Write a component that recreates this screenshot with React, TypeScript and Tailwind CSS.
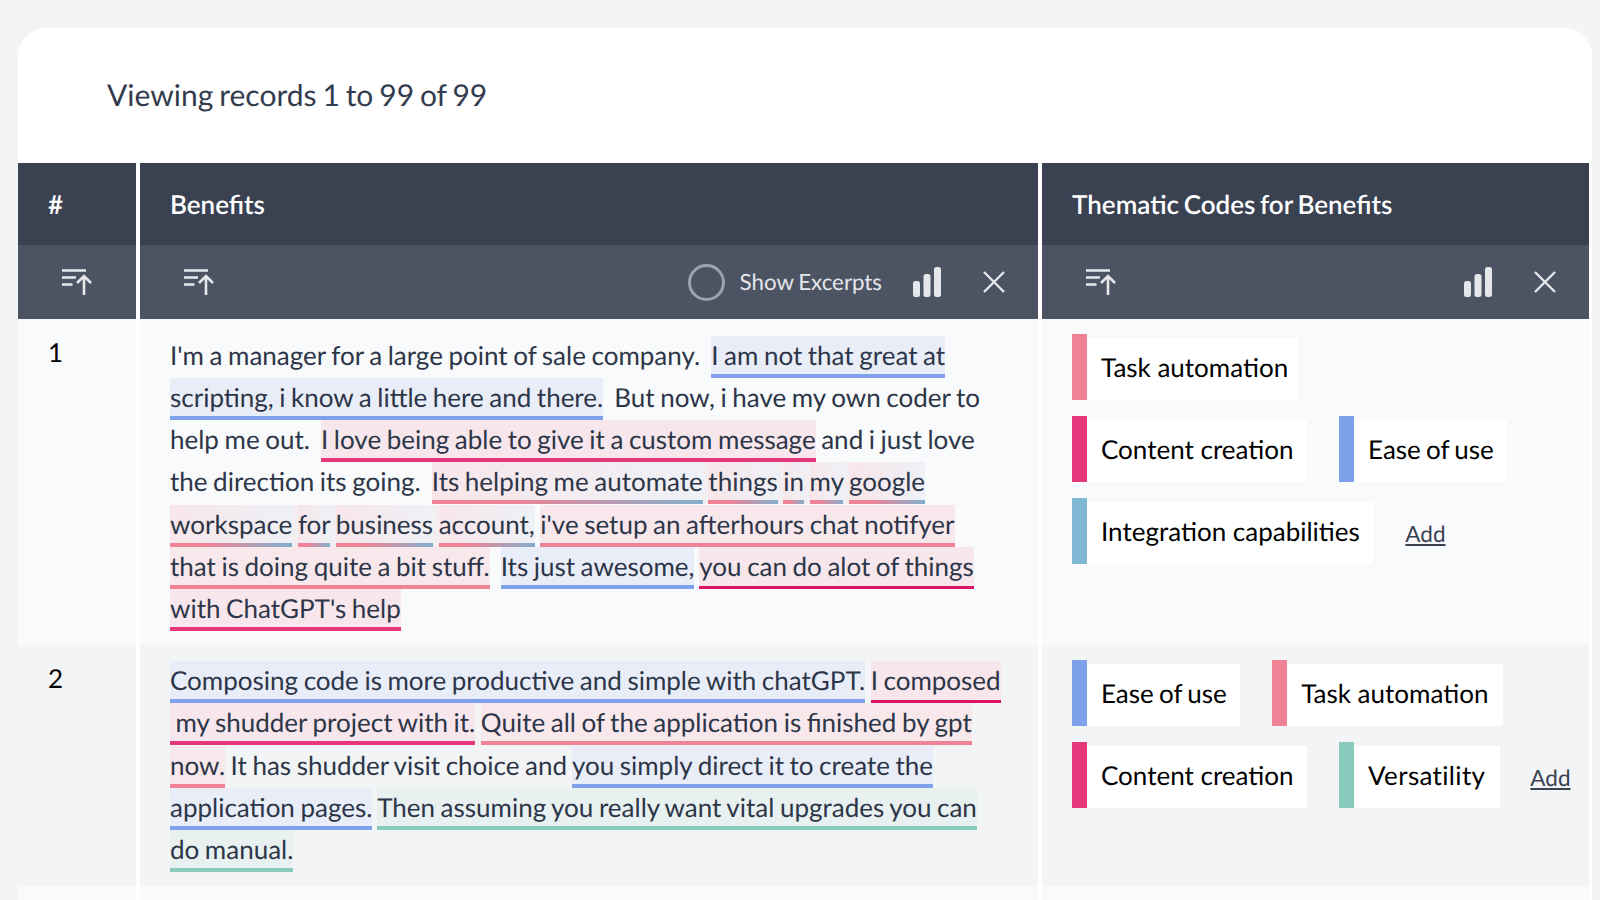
import React from "react";

function SortIcon() {
  return (
    <svg width="30" height="26" viewBox="0 0 30 26" fill="none" stroke="#e5e7eb" strokeWidth="2.6">
      <path d="M0 1.5h24M0 8.5h14M0 15.5h10.5" />
      <path d="M22 26V7M15 14l7-7 7 7" />
    </svg>
  );
}

function BarsIcon() {
  return (
    <svg width="28" height="30" viewBox="0 0 28 30" fill="#e5e7eb">
      <rect x="0" y="14" width="7" height="16" rx="2.5" />
      <rect x="10.5" y="7" width="7" height="23" rx="2.5" />
      <rect x="21" y="0" width="7" height="30" rx="2.5" />
    </svg>
  );
}

function CloseIcon() {
  return (
    <svg width="22" height="22" viewBox="0 0 22 22" stroke="#e5e7eb" strokeWidth="2.4" fill="none">
      <path d="M1 1l20 20M21 1L1 21" />
    </svg>
  );
}

type Kids = { children: React.ReactNode };

function Blue({ children }: Kids) {
  return <span className="bg-[#e9edf8] border-b-[4px] border-[#7fa1ec] pt-[3px] pb-[3px]">{children}</span>;
}
function Rose({ children }: Kids) {
  return <span className="bg-[#f8e8ec] border-b-[4px] border-[#ef8395] pt-[3px] pb-[3px]">{children}</span>;
}
function Pink({ children }: Kids) {
  return <span className="bg-[#f7e6ec] border-b-[4px] border-[#e4387a] pt-[3px] pb-[3px]">{children}</span>;
}
function PinkDark({ children }: Kids) {
  return <span className="bg-[#f7e6ec] border-b-[3px] border-[#dc1466] pt-[3px] pb-[4px]">{children}</span>;
}
function Teal({ children }: Kids) {
  return <span className="bg-[#e8f0f0] border-b-[4px] border-[#88cbbc] pt-[3px] pb-[3px]">{children}</span>;
}
function MixGroup({ children }: Kids) {
  return <span className="bg-[#f3eef2] pt-[3px] pb-[7px]">{children}</span>;
}
function Mix({ children }: Kids) {
  return (
    <span className="bg-[linear-gradient(90deg,#ef8395_30%,#80afcc_100%),linear-gradient(90deg,#f8e6ea,#eef1f6)] bg-no-repeat bg-[length:100%_4px,100%_100%] bg-[position:0_100%,0_0] pt-[3px] pb-[7px]">
      {children}
    </span>
  );
}

function Tag({ color, label, box = "pr-[13.5px]", text = "" }: { color: string; label: string; box?: string; text?: string }) {
  const bars: Record<string, string> = {
    blue: "bg-[#7fa1ec]",
    rose: "bg-[#ef8395]",
    pink: "bg-[#e4387a]",
    teal: "bg-[#88cbbc]",
    sky: "bg-[#80b8d4]",
  };
  return (
    <div className="flex h-[66px] items-stretch">
      <div className={`w-[14.5px] shrink-0 ${bars[color]}`} />
      <div className={`mt-[4px] flex items-center bg-white pb-[3px] pl-[14.5px] text-black ${box} ${text}`}>{label}</div>
    </div>
  );
}

export default function App() {
  return (
    <div className="h-[900px] w-[1600px] overflow-hidden bg-[#f3f4f6] pl-[18px] pr-[8px] pt-[28px] font-['Lato',sans-serif] text-[26px] text-[#2d3648] [text-rendering:geometricPrecision]">
      <div className="h-[900px] rounded-t-[28px] bg-white">
        <div className="flex h-[135px] items-center pl-[89px] pb-[1px] text-[30px] text-[#333c4e] [word-spacing:-1.8px]">
          Viewing records 1 to 99 of 99
        </div>
        <div className="grid grid-cols-[118px_898px_547px] gap-x-[4px] bg-white">
          <div className="flex h-[82px] items-center bg-[#3a4252] pl-[30px] font-semibold text-white">#</div>
          <div className="flex h-[82px] items-center bg-[#3a4252] pl-[30px] font-semibold text-white">Benefits</div>
          <div className="flex h-[82px] items-center bg-[#3a4252] pl-[30px] font-semibold text-white [word-spacing:-1.8px]">Thematic Codes for Benefits</div>

          <div className="flex h-[74px] items-center bg-[#4c5464] pl-[44px]">
            <SortIcon />
          </div>
          <div className="flex h-[74px] items-center bg-[#4c5464] pl-[44px] pr-[33px]">
            <SortIcon />
            <div className="ml-auto flex items-center">
              <div className="h-[37px] w-[37px] rounded-full border-[3px] border-[#9ca3af]" />
              <span className="ml-[15px] text-[22.3px] text-[#e5e7eb] [word-spacing:-1px]">Show Excerpts</span>
              <div className="ml-[31px]">
                <BarsIcon />
              </div>
              <div className="ml-[42px]">
                <CloseIcon />
              </div>
            </div>
          </div>
          <div className="flex h-[74px] items-center bg-[#4c5464] pl-[44px] pr-[33px]">
            <SortIcon />
            <div className="ml-auto flex items-center">
              <BarsIcon />
              <div className="ml-[42px]">
                <CloseIcon />
              </div>
            </div>
          </div>

          <div className="h-[326px] bg-[#f9fafb] pl-[30px] pt-[14px] text-black">1</div>
          <div className="h-[326px] bg-[#f9fafb] pl-[30px] pt-[14.6px] leading-[42.3px] [word-spacing:-1.1px]">
            I'm a manager for a large point of sale company.&nbsp; <Blue>I am not that great at<br />scripting, i know a little here and there.</Blue>&nbsp; But now, i have my own coder to<br />
            help me out.&nbsp; <Pink>I love being able to give it a custom message</Pink> and i just love<br />
            the direction its going.&nbsp; <MixGroup><Mix>Its helping me automate</Mix> <Mix>things</Mix> <Mix>in</Mix> <Mix>my</Mix> <Mix>google</Mix></MixGroup><br />
            <MixGroup><Mix>workspace</Mix> <Mix>for</Mix> <Mix>business</Mix> <Mix>account,</Mix></MixGroup> <Rose>i've setup an afterhours chat notifyer<br />that is doing quite a bit stuff.</Rose>&nbsp; <Blue>Its just awesome,</Blue> <PinkDark>you can do alot of things</PinkDark><br /><Pink>with ChatGPT's help</Pink>
          </div>
          <div className="flex h-[326px] flex-col gap-[16px] bg-[#f9fafb] pl-[30px] pt-[15px]">
            <div className="flex gap-[32px]"><Tag color="rose" label="Task automation" box="pr-[10px]" /></div>
            <div className="flex gap-[32px]"><Tag color="pink" label="Content creation" /><Tag color="blue" label="Ease of use" text="[word-spacing:-1.5px]" /></div>
            <div className="flex items-center gap-[32px]"><Tag color="sky" label="Integration capabilities" /><span className="mt-[6px] text-[22.5px] text-[#3a4252] underline">Add</span></div>
          </div>

          <div className="h-[241px] bg-[#f3f4f6] pl-[30px] pt-[14px] text-black">2</div>
          <div className="h-[241px] bg-[#f3f4f6] pl-[30px] pt-[14px] leading-[42.3px] [word-spacing:-1.1px]">
            <Blue>Composing code is more productive and simple with chatGPT.</Blue> <PinkDark>I composed</PinkDark><br /><Pink>&nbsp;my shudder project with it.</Pink> <Rose>Quite all of the application is finished by gpt<br />now.</Rose> It has shudder visit choice and <Blue>you simply direct it to create the<br />application pages.</Blue> <Teal>Then assuming you really want vital upgrades you can<br />do manual.</Teal>
          </div>
          <div className="flex h-[241px] flex-col gap-[16px] bg-[#f3f4f6] pl-[30px] pt-[15px]">
            <div className="flex gap-[32px]"><Tag color="blue" label="Ease of use" text="[word-spacing:-1.5px]" box="pr-[13.5px]" /><Tag color="rose" label="Task automation" box="pr-[15px]" /></div>
            <div className="flex items-center"><Tag color="pink" label="Content creation" /><div className="ml-[32px]"><Tag color="teal" label="Versatility" box="pr-[15px]" text="tracking-[0.35px]" /></div><span className="ml-[30px] mt-[6px] text-[22.5px] text-[#3a4252] underline">Add</span></div>
          </div>

          <div className="h-[40px] bg-[#f9fafb]" />
          <div className="h-[40px] bg-[#f9fafb]" />
          <div className="h-[40px] bg-[#f9fafb]" />
        </div>
      </div>
    </div>
  );
}
